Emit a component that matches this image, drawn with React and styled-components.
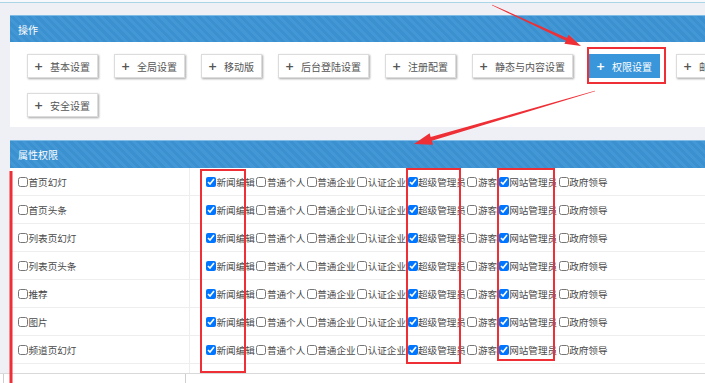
import styled, { createGlobalStyle } from 'styled-components';

const GlobalStyle = createGlobalStyle`
  html, body {
    margin: 0;
    padding: 0;
    overflow: hidden;
    background: #eef0f5;
  }
  body {
    font-family: "Noto Sans CJK SC", "Noto Sans", sans-serif;
    width: 705px;
    height: 383px;
    position: relative;
  }
`;

const TopStrip = styled.div`
  height: 2px;
  background: #f6f8fb;
  border-bottom: 1px solid #a9d5e7;
`;

const Page = styled.div`
  width: 770px;
  padding-left: 10px;
`;

const Panel = styled.section`
  margin-top: ${(p) => p.$top}px;
  background: #fff;
`;

const PanelHeader = styled.div`
  height: ${(p) => p.$height}px;
  display: flex;
  align-items: center;
  padding-left: 8px;
  color: #fff;
  font-size: 10px;
  box-sizing: border-box;
  border-top: 1px solid #7fbbe4;
  background: repeating-linear-gradient(
    45deg,
    #3b91d0 0 3px,
    #4297d4 3px 6px
  );
`;

const ButtonArea = styled.div`
  display: flex;
  flex-wrap: wrap;
  gap: 15px 16px;
  padding: 12px 17px 10px;
`;

const ActionButton = styled.button`
  height: 24px;
  display: inline-flex;
  align-items: center;
  padding: 0 7px 0 6px;
  border: 1px solid ${(p) => (p.$active ? '#3a96da' : '#dcdcdc')};
  background: ${(p) => (p.$active ? '#3a96da' : '#fff')};
  color: ${(p) => (p.$active ? '#fff' : '#555')};
  font-family: inherit;
  font-size: 10px;
  box-shadow: ${(p) => (p.$active ? 'none' : '1px 1px 2px rgba(0,0,0,0.35)')};
  box-sizing: border-box;
  white-space: nowrap;
`;

const Plus = styled.span`
  width: 7px;
  margin-right: 9px;
  font-weight: bold;
  font-size: 11px;
  line-height: 1;
  font-family: "DejaVu Sans", sans-serif;
`;

const Row = styled.div`
  display: flex;
  height: 28px;
  box-sizing: border-box;
  border-bottom: 1px solid #eeeeee;
`;

const NameCell = styled.div`
  width: 180px;
  box-sizing: border-box;
  padding-left: 8px;
  border-right: 1px solid #eeeeee;
  display: flex;
  align-items: center;
`;

const RoleCell = styled.div`
  flex: 1;
  padding-left: 16px;
  display: flex;
  align-items: center;
`;

const Check = styled.label`
  display: inline-flex;
  align-items: center;
  margin-right: 1.5px;
  font-size: 9.6px;
  color: #4a4a4a;
  white-space: nowrap;

  input {
    width: 10px;
    height: 10px;
    margin: 0 0.5px 0 0;
  }
`;

const Overlay = styled.svg`
  position: absolute;
  top: 0;
  left: 0;
  z-index: 10;
  pointer-events: none;
`;

const BottomBar = styled.div`
  position: fixed;
  left: 0;
  right: 0;
  bottom: 0;
  height: 9px;
  z-index: 5;
  display: flex;
  background: #fff;
  border-top: 1px solid #d9d9d9;
`;

const BarSeg = styled.div`
  width: ${(p) => p.$w}px;
  border-right: 1px solid #cfcfcf;
`;

const buttons = [
  '基本设置',
  '全局设置',
  '移动版',
  '后台登陆设置',
  '注册配置',
  '静态与内容设置',
  '权限设置',
  '邮件设置',
  '安全设置',
];

const items = [
  '首页幻灯',
  '首页头条',
  '列表页幻灯',
  '列表页头条',
  '推荐',
  '图片',
  '频道页幻灯',
  '频道页头条',
];

const roles = [
  ['新闻编辑', true],
  ['普通个人', false],
  ['普通企业', false],
  ['认证企业', false],
  ['超级管理员', true],
  ['游客', false],
  ['网站管理员', true],
  ['政府领导', false],
];

const RED = '#ee2f36';

const App = () => (
  <>
    <GlobalStyle />
    <TopStrip />
    <Page>
      <Panel $top={12}>
        <PanelHeader $height={27}>操作</PanelHeader>
        <ButtonArea>
          {buttons.map((b) => (
            <ActionButton key={b} $active={b === '权限设置'}>
              <Plus>+</Plus>
              {b}
            </ActionButton>
          ))}
        </ButtonArea>
      </Panel>
      <Panel $top={13}>
        <PanelHeader $height={28}>属性权限</PanelHeader>
        {items.map((it) => (
          <Row key={it}>
            <NameCell>
              <Check>
                <input type="checkbox" />
                {it}
              </Check>
            </NameCell>
            <RoleCell>
              {roles.map(([r, on]) => (
                <Check key={r}>
                  <input type="checkbox" defaultChecked={on} />
                  {r}
                </Check>
              ))}
            </RoleCell>
          </Row>
        ))}
      </Panel>
    </Page>
    <BottomBar>
      <BarSeg $w={3} />
      <BarSeg $w={181} />
    </BottomBar>
    <Overlay width="705" height="383" viewBox="0 0 705 383">
      <g fill="none" stroke={RED} strokeWidth="2">
        <rect x="588" y="48" width="77" height="35" />
        <rect x="201" y="170" width="44" height="202" />
        <rect x="407" y="169" width="53" height="194" />
        <rect x="498" y="169" width="56" height="191" />
      </g>
      <rect x="9.5" y="171" width="3" height="212" fill={RED} />
      <polygon
        fill={RED}
        points="491.9,5.3 565.9,40.7 564.4,43.8 581,46 568.6,34.8 567.1,37.9 492.1,4.7"
      />
      <polygon
        fill={RED}
        points="594.9,90.7 430.7,137 429.6,133.2 414,144 433,144.7 431.9,140.8 595.1,91.3"
      />
    </Overlay>
  </>
);

export default App;
